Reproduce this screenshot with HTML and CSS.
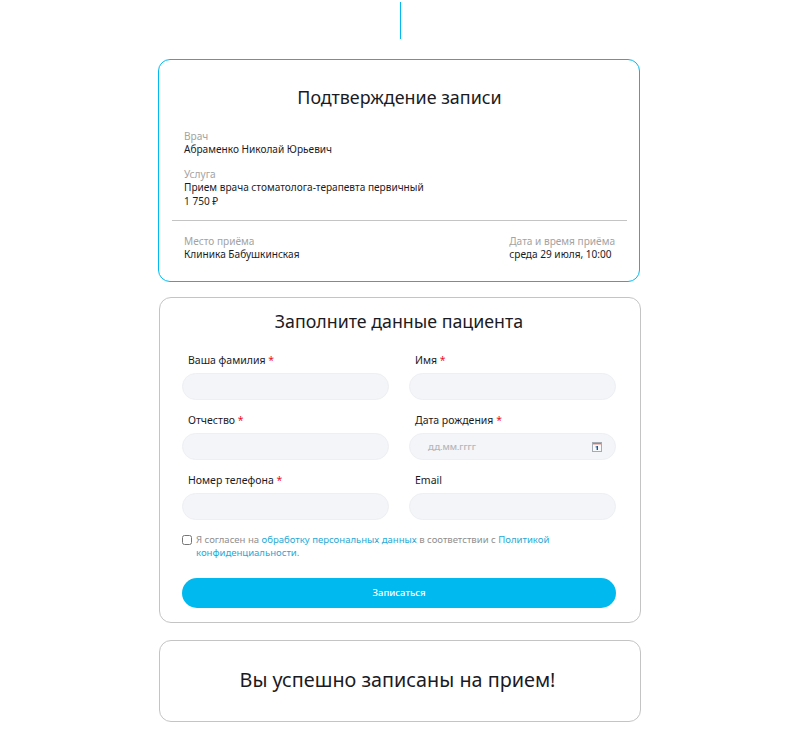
FILE: index.html
```html
<!DOCTYPE html>
<html>
<head>
  <title>Подтверждение записи</title>
  <meta charset="utf-8">
  <link rel="stylesheet" href="styles.css">
</head>
<body>
  <div class="step-line"></div>

  <div class="page">
    <section class="card card-confirm">
      <h2 class="confirm-title">Подтверждение записи</h2>
      <div class="info">
        <div class="info-label">Врач</div>
        <div class="info-value">Абраменко Николай Юрьевич</div>
      </div>
      <div class="info info-service">
        <div class="info-label">Услуга</div>
        <div class="info-value">Прием врача стоматолога-терапевта первичный</div>
        <div class="info-value">1 750 ₽</div>
      </div>
      <div class="confirm-bottom">
        <div class="info">
          <div class="info-label">Место приёма</div>
          <div class="info-value">Клиника Бабушкинская</div>
        </div>
        <div class="info">
          <div class="info-label">Дата и время приёма</div>
          <div class="info-value">среда 29 июля, 10:00</div>
        </div>
      </div>
    </section>

    <section class="card card-form">
      <h2 class="form-title">Заполните данные пациента</h2>
      <div class="fields">
        <div class="field">
          <label>Ваша фамилия <span class="req">*</span></label>
          <div class="input"></div>
        </div>
        <div class="field">
          <label>Имя <span class="req">*</span></label>
          <div class="input"></div>
        </div>
        <div class="field">
          <label>Отчество <span class="req">*</span></label>
          <div class="input"></div>
        </div>
        <div class="field">
          <label>Дата рождения <span class="req">*</span></label>
          <div class="input input-date">
            <span class="date-hint">ДД.ММ.ГГГГ</span>
            <svg class="date-icon" width="10" height="10" viewBox="0 0 10 10">
              <rect x="0.5" y="0.5" width="9" height="9" fill="#f7f9fb" stroke="#a4abb3"/>
              <rect x="1" y="1" width="8" height="1.4" fill="#e0705f"/>
              <rect x="4.6" y="4" width="1.4" height="4" fill="#1c5a96"/>
              <rect x="3.6" y="4.4" width="1.2" height="1" fill="#1c5a96"/>
            </svg>
          </div>
        </div>
        <div class="field">
          <label>Номер телефона <span class="req">*</span></label>
          <div class="input"></div>
        </div>
        <div class="field">
          <label>Email</label>
          <div class="input"></div>
        </div>
      </div>

      <div class="agree">
        <input type="checkbox" class="agree-check">
        <p class="agree-text">Я согласен на <a href="#">обработку персональных данных</a> в соответствии с <a href="#">Политикой</a> <a href="#">конфиденциальности.</a></p>
      </div>

      <button class="submit">Записаться</button>
    </section>

    <section class="card card-done">
      <h2 class="done-title">Вы успешно записаны на прием!</h2>
    </section>
  </div>
</body>
</html>
```

FILE: styles.css
```css
* {
  box-sizing: border-box;
}

body {
  margin: 0;
  padding-top: 2px;
  background: #fff;
  font-family: "Noto Sans", "Open Sans", sans-serif;
  color: #1b1b1f;
}

.step-line {
  width: 1px;
  height: 37px;
  margin: 0 auto 20px;
  background: #00b9ef;
}

.page {
  width: 482px;
  margin: 0 auto;
}

.card {
  background: #fff;
  border: 1px solid #c4c4c4;
  border-radius: 12px;
}

h2 {
  margin: 0;
  font-weight: 400;
  text-align: center;
}

/* Confirmation card */
.card-confirm {
  width: 482px;
  height: 223px;
  margin: 0 0 15px -1px;
  padding: 25px 12px 0 13px;
  border-color: #00b9ef;
}

.confirm-title {
  font-size: 17.9px;
  line-height: 24px;
  margin-bottom: 21px;
}

.info {
  padding: 0 12px;
}

.info-service {
  margin-top: 11.5px;
}

.info-label {
  font-size: 10.1px;
  line-height: 13px;
  color: #a3a3a3;
}

.info-value {
  font-size: 10.1px;
  line-height: 13.5px;
}

.confirm-bottom {
  display: flex;
  justify-content: space-between;
  margin-top: 12px;
  padding-top: 14px;
  border-top: 1px solid #c4c4c4;
}

/* Patient form */
.card-form {
  height: 326px;
  margin-bottom: 17px;
  padding: 11px 24px 0 22px;
}

.form-title {
  font-size: 17.8px;
  line-height: 24px;
  margin-bottom: 19px;
}

.fields {
  display: grid;
  grid-template-columns: 207px 207px;
  column-gap: 20px;
  row-gap: 12px;
}

.field label {
  display: block;
  height: 21px;
  padding-left: 6px;
  font-size: 10.5px;
  line-height: 16px;
}

.req {
  color: #e8112d;
}

.input {
  height: 27px;
  background: #f4f5f8;
  border: 1px solid #eeeff2;
  border-radius: 14px;
}

.input-date {
  display: flex;
  align-items: center;
  justify-content: space-between;
  padding: 0 13px 0 18px;
}

.date-hint {
  font-size: 7.8px;
  font-weight: 600;
  color: #b4b6ba;
}

/* Agreement */
.agree {
  display: flex;
  align-items: flex-start;
  margin-top: 13px;
}

.agree-check {
  width: 10px;
  height: 10px;
  margin: 2px 4px 0 0;
  flex: none;
}

.agree-text {
  margin: 0;
  width: 400px;
  font-size: 9.55px;
  line-height: 13px;
  color: #8f8f8f;
}

.agree-text a {
  color: #27a9d6;
  text-decoration: none;
}

.submit {
  display: block;
  width: 100%;
  height: 30px;
  margin-top: 19px;
  padding: 0 0 2px;
  border: 0;
  border-radius: 15px;
  background: #00b9ef;
  color: #fff;
  font-family: inherit;
  font-size: 9.5px;
  font-weight: 500;
}

/* Success card */
.card-done {
  height: 82px;
  display: flex;
  align-items: center;
  justify-content: center;
  padding: 0 5px 2px 0;
}

.done-title {
  font-size: 19.8px;
  line-height: 28px;
}
```
